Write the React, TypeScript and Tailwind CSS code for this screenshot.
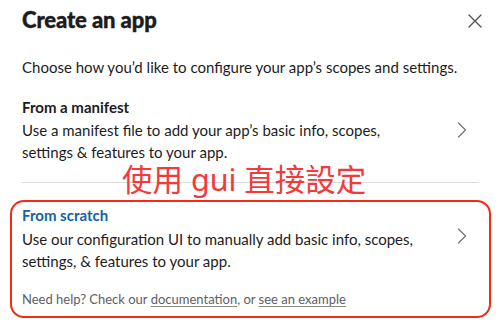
import React from 'react';

const ChevronRight = () => (
  <svg width="10" height="16" viewBox="0 0 10 16" fill="none" className="shrink-0">
    <path d="M1.5 1 L8.5 8 L1.5 15" stroke="#7a797a" strokeWidth="1.4" strokeLinecap="round" strokeLinejoin="round" />
  </svg>
);

const CloseIcon = () => (
  <svg width="16" height="16" viewBox="0 0 16 16" fill="none">
    <path d="M2 2 L14 14 M14 2 L2 14" stroke="#555455" strokeWidth="1.4" strokeLinecap="round" />
  </svg>
);

const App: React.FC = () => {
  return (
    <div
      className="relative w-[501px] h-[332px] overflow-hidden bg-white text-[#1d1c1d]"
      style={{ fontFamily: 'Lato, "Noto Sans", sans-serif' }}
    >
      {/* header */}
      <div className="flex items-start justify-between pl-[22px] pr-[18px] pt-[6px]">
        <h1 className="text-[22px] leading-[28px] font-black tracking-[-0.1px] [-webkit-text-stroke:0.4px_#1d1c1d]">
          Create an app
        </h1>
        <button className="mt-[7px] flex items-center justify-center">
          <CloseIcon />
        </button>
      </div>

      <p className="mt-[22px] px-[22px] text-[15px] leading-[22px]">
        Choose how you’d like to configure your app’s scopes and settings.
      </p>

      {/* manifest option */}
      <div className="mt-[18px] mx-[22px] flex items-center justify-between pb-[19px] border-b border-[#dddddd]">
        <div className="w-[400px]">
          <div className="text-[15px] leading-[22px] font-bold">From a manifest</div>
          <div className="mt-[1px] text-[15px] leading-[22px]">
            Use a manifest file to add your app’s basic info, scopes, settings &amp; features to your app.
          </div>
        </div>
        <div className="mr-[12px]">
          <ChevronRight />
        </div>
      </div>

      {/* scratch option */}
      <div className="mt-[17px] mx-[10px] rounded-[14px] border-2 border-[#f52a12] px-[10px] pt-[2px] pb-[8px]">
        <div className="flex items-center justify-between">
          <div className="w-[400px]">
            <div className="text-[15px] leading-[22px] font-bold text-[#1264a3]">From scratch</div>
            <div className="mt-[2px] text-[15px] leading-[22px]">
              Use our configuration UI to manually add basic info, scopes, settings, &amp; features to your app.
            </div>
          </div>
          <div className="mr-[12px] -mt-[4px]">
            <ChevronRight />
          </div>
        </div>
        <div className="mt-[18px] text-[13px] leading-[18px] text-[#616061]">
          Need help? Check our{' '}
          <span className="underline underline-offset-2 decoration-[#8a898a]">documentation</span>, or{' '}
          <span className="underline underline-offset-2 decoration-[#8a898a]">see an example</span>
        </div>
      </div>

      {/* annotation overlay */}
      <div
        className="absolute left-[122px] top-[164px] text-[30.5px] leading-[31px] text-[#f3393a] whitespace-nowrap"
        style={{ fontFamily: '"Noto Sans", "Noto Sans CJK TC", sans-serif' }}
      >
        使用 gui 直接設定
      </div>
    </div>
  );
};

export default App;
